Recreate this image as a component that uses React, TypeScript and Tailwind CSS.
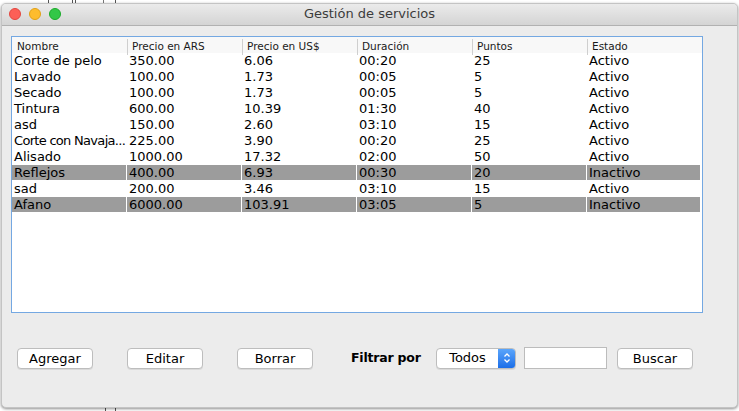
import React from "react";

type Row = {
  nombre: string;
  ars: string;
  usd: string;
  duracion: string;
  puntos: string;
  estado: string;
};

const rows: Row[] = [
  { nombre: "Corte de pelo", ars: "350.00", usd: "6.06", duracion: "00:20", puntos: "25", estado: "Activo" },
  { nombre: "Lavado", ars: "100.00", usd: "1.73", duracion: "00:05", puntos: "5", estado: "Activo" },
  { nombre: "Secado", ars: "100.00", usd: "1.73", duracion: "00:05", puntos: "5", estado: "Activo" },
  { nombre: "Tintura", ars: "600.00", usd: "10.39", duracion: "01:30", puntos: "40", estado: "Activo" },
  { nombre: "asd", ars: "150.00", usd: "2.60", duracion: "03:10", puntos: "15", estado: "Activo" },
  { nombre: "Corte con Navaja...", ars: "225.00", usd: "3.90", duracion: "00:20", puntos: "25", estado: "Activo" },
  { nombre: "Alisado", ars: "1000.00", usd: "17.32", duracion: "02:00", puntos: "50", estado: "Activo" },
  { nombre: "Reflejos", ars: "400.00", usd: "6.93", duracion: "00:30", puntos: "20", estado: "Inactivo" },
  { nombre: "sad", ars: "200.00", usd: "3.46", duracion: "03:10", puntos: "15", estado: "Activo" },
  { nombre: "Afano", ars: "6000.00", usd: "103.91", duracion: "03:05", puntos: "5", estado: "Inactivo" },
];

const headers = ["Nombre", "Precio en ARS", "Precio en US$", "Duración", "Puntos", "Estado"];

const font = { fontFamily: '"DejaVu Sans", "Liberation Sans", sans-serif' };

function MacButton({ label }: { label: string }) {
  return (
    <button className="h-[21px] w-[76px] rounded-[4px] border border-[#bdbdbd] bg-white text-[13px] leading-none text-black shadow-[0_1px_0_rgba(0,0,0,0.08)]">
      {label}
    </button>
  );
}

export default function App() {
  return (
    <div className="relative h-[411px] w-[739px] overflow-hidden bg-white" style={font}>
      {/* bits of the window behind */}
      <div className="absolute left-[48px] top-0 h-[3px] w-px bg-[#555]" />
      <div className="absolute left-[72px] top-0 h-[3px] w-px bg-[#555]" />
      <div className="absolute left-[75px] top-0 h-[3px] w-px bg-[#555]" />
      <div className="absolute left-[103px] top-0 h-[3px] w-px bg-[#777]" />
      <div className="absolute left-[115px] top-0 h-[3px] w-px bg-[#555]" />
      <div className="absolute left-[105px] bottom-0 h-[3px] w-px bg-[#555]" />
      <div className="absolute left-[115px] bottom-0 h-[3px] w-px bg-[#555]" />

      <div className="relative ml-px mt-[3px] flex h-[405px] w-[737px] flex-col overflow-hidden rounded-[5px] border border-[#c4c4c4] bg-[#ececec] shadow-[0_1px_3px_rgba(0,0,0,0.45)]">
        {/* Title bar */}
        <div className="relative flex h-[22px] shrink-0 items-center justify-center border-b border-[#b1b1b1] bg-gradient-to-b from-[#ebebeb] to-[#d4d4d4]">
          <div className="absolute left-[7px] top-[4px] flex gap-[8px]">
            <span className="h-[12px] w-[12px] rounded-full border border-[#e2463f] bg-[#fc5f57]" />
            <span className="h-[12px] w-[12px] rounded-full border border-[#e1a116] bg-[#fdbc2e]" />
            <span className="h-[12px] w-[12px] rounded-full border border-[#1aab29] bg-[#33c748]" />
          </div>
          <span className="-mt-px text-[13px] text-[#3c3c3c]">Gestión de servicios</span>
        </div>

        {/* Content */}
        <div className="flex flex-col px-[9px] pt-[10px]">
          <div className="h-[277px] w-[692px] border border-[#74a8e2] bg-white">
            <div className="grid h-[16px] grid-cols-[115px_115px_115px_115px_115px_114px] bg-[#f8f8f8] text-[10.5px] text-[#1a1a1a]">
              {headers.map((h, i) => (
                <div key={h} className="flex items-center py-[2px]">
                  <div
                    className={`flex h-full items-center ${
                      i === 0 ? "pl-[5px]" : "border-l border-[#cfcfcf] pl-[4px]"
                    }`}
                  >
                    {h}
                  </div>
                </div>
              ))}
            </div>
            {rows.map((r) => {
              const gray = r.estado === "Inactivo";
              const cells = [r.nombre, r.ars, r.usd, r.duracion, r.puntos, r.estado];
              return (
                <div
                  key={r.nombre}
                  className="grid h-[16px] grid-cols-[115px_115px_115px_115px_115px_114px] text-[13px] leading-none text-black"
                >
                  {cells.map((c, i) => (
                    <div
                      key={i}
                      className={`flex h-[15px] items-center overflow-hidden whitespace-nowrap pl-[2px] ${
                        gray ? "border-r border-white bg-[#9c9c9c]" : ""
                      } ${c.length > 15 ? "tracking-[-0.7px]" : ""}`}
                    >
                      {c}
                    </div>
                  ))}
                </div>
              );
            })}
          </div>

          {/* Bottom controls */}
          <div className="ml-[6px] mt-[33px] flex items-center">
            <MacButton label="Agregar" />
            <div className="ml-[34px]">
              <MacButton label="Editar" />
            </div>
            <div className="ml-[34px]">
              <MacButton label="Borrar" />
            </div>
            <span className="ml-[38px] w-[85px] text-[12.5px] font-bold tracking-[-0.2px] text-black">
              Filtrar por
            </span>
            <div className="flex h-[21px] w-[80px] overflow-hidden rounded-[4px] border border-[#bdbdbd] bg-white shadow-[0_1px_0_rgba(0,0,0,0.08)]">
              <span className="flex flex-1 items-center justify-center text-[13px] text-black">Todos</span>
              <span className="flex w-[17px] items-center justify-center bg-gradient-to-b from-[#5aa5fb] to-[#1b6ee8]">
                <svg width="8" height="12" viewBox="0 0 8 12" fill="none" stroke="white" strokeWidth="1.3">
                  <path d="M1.5 4.5 L4 2 L6.5 4.5" />
                  <path d="M1.5 7.5 L4 10 L6.5 7.5" />
                </svg>
              </span>
            </div>
            <div className="ml-[8px] h-[22px] w-[83px] border border-[#bcbcbc] bg-white" />
            <div className="ml-[10px]">
              <MacButton label="Buscar" />
            </div>
          </div>
        </div>
      </div>
    </div>
  );
}
